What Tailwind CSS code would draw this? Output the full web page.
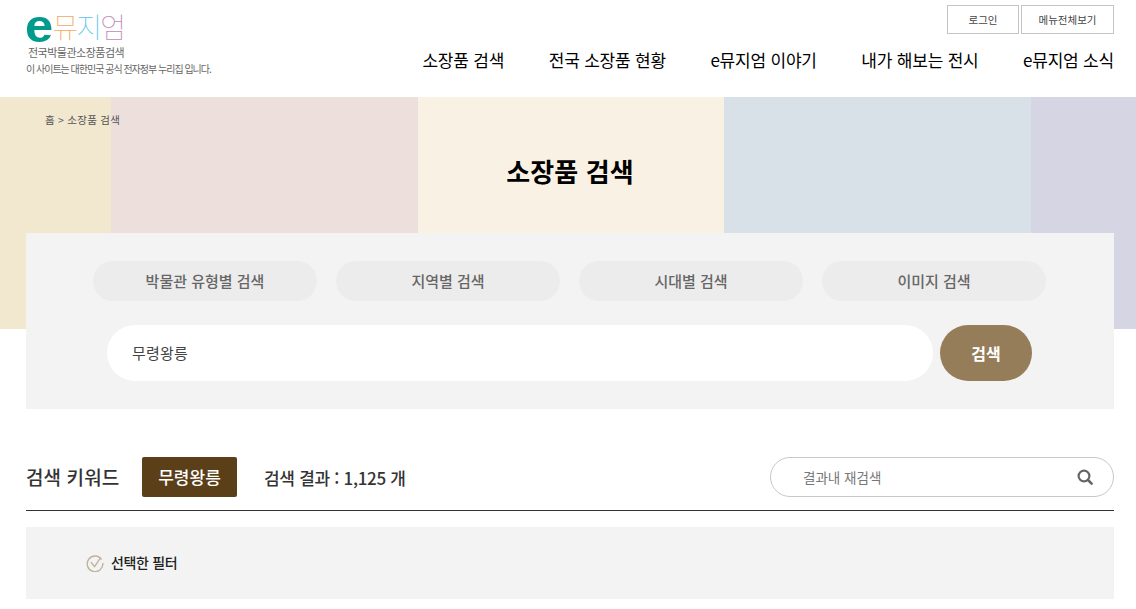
<!DOCTYPE html>
<html lang="ko">
<head>
<meta charset="utf-8">
<script src="https://cdn.jsdelivr.net/npm/@tailwindcss/browser@4"></script>
</head>
<body class="bg-white overflow-hidden font-['Noto_Sans_CJK_KR','Noto_Sans',sans-serif] text-[#222]">
<div class="w-[1136px] h-[609px] overflow-hidden">
  <header class="h-[97px] pl-[22px] pr-[22px] flex justify-between">
    <div class="w-[200px] pl-[4px] shrink-0">
      <div class="flex items-end h-[44px] pb-px">
        <span class="font-['Liberation_Sans'] font-bold text-[46px] text-[#009b8c] leading-[34px] h-[34px] scale-x-110 origin-left -ml-[1px] mr-[2px]">e</span>
        <span class="text-[28px] font-thin leading-[34px] text-[#f5a860]">뮤</span>
        <span class="text-[28px] font-thin leading-[34px] text-[#55c4ee] -ml-[2px]">지</span>
        <span class="text-[28px] font-thin leading-[34px] text-[#c08abb] -ml-[2px]">엄</span>
      </div>
      <p class="text-[11px] leading-[14px] pl-[2px] text-[#666] tracking-[-0.5px] mt-px">전국박물관소장품검색</p>
      <p class="text-[10px] leading-[14px] mt-[3px] text-[#666] tracking-[-1px] whitespace-nowrap">이 사이트는 대한민국 공식 전자정부 누리집 입니다.</p>
    </div>
    <div class="flex flex-col items-end">
      <div class="flex gap-[2px] mt-[5px]">
        <a class="w-[72px] h-[29px] border border-[#c4c4c4] flex items-center justify-center text-[10.5px] text-[#444]">로그인</a>
        <a class="w-[93px] h-[29px] border border-[#c4c4c4] flex items-center justify-center text-[10.5px] text-[#444]">메뉴전체보기</a>
      </div>
      <nav class="flex gap-[44.5px] mt-[13px] text-[17px] leading-[26px] font-normal text-black tracking-[-0.2px] whitespace-nowrap">
        <a>소장품 검색</a><a>전국 소장품 현황</a><a>e뮤지엄 이야기</a><a>내가 해보는 전시</a><a>e뮤지엄 소식</a>
      </nav>
    </div>
  </header>

  <section class="relative h-[232px] flex">
    <div class="w-[111px] bg-[#f2e8d0]"></div>
    <div class="w-[307px] bg-[#eddfdc]"></div>
    <div class="w-[306px] bg-[#f9f2e4]"></div>
    <div class="w-[307px] bg-[#d8e0e8]"></div>
    <div class="flex-1 bg-[#d5d5e3]"></div>
    <p class="absolute left-[45px] top-[15px] text-[10.5px] leading-[16px] text-[#555] tracking-[0.25px]">홈 &gt; 소장품 검색</p>
    <h1 class="absolute left-[4px] right-0 top-[54px] text-center text-[26px] leading-[40px] font-bold text-black tracking-[0.1px]">소장품 검색</h1>
  </section>

  <section class="relative ml-[26px] w-[1088px] -mt-[96px] h-[176px] bg-[#f3f3f3] pt-[28px]">
    <div class="flex gap-[19px] pl-[67px]">
      <a class="w-[224px] h-[40px] rounded-full bg-[#ececec] flex items-center justify-center text-[15px] font-medium text-[#666]">박물관 유형별 검색</a>
      <a class="w-[224px] h-[40px] rounded-full bg-[#ececec] flex items-center justify-center text-[15px] font-medium text-[#666]">지역별 검색</a>
      <a class="w-[224px] h-[40px] rounded-full bg-[#ececec] flex items-center justify-center text-[15px] font-medium text-[#666]">시대별 검색</a>
      <a class="w-[224px] h-[40px] rounded-full bg-[#ececec] flex items-center justify-center text-[15px] font-medium text-[#666]">이미지 검색</a>
    </div>
    <div class="flex gap-[7px] mt-[24px] pl-[81px]">
      <div class="w-[826px] h-[56px] rounded-full bg-white pl-[25px] flex items-center text-[15px] text-[#444] tracking-[0.2px]">무령왕릉</div>
      <button class="w-[92px] h-[56px] rounded-full bg-[#967d5a] text-white text-[16px] font-bold">검색</button>
    </div>
  </section>

  <section class="ml-[26px] w-[1088px] mt-[48px] h-[54px] border-b border-[#333] flex items-start">
    <h2 class="text-[19px] leading-[40px] font-medium text-[#333] w-[116px] tracking-[0.1px] whitespace-nowrap">검색 키워드</h2>
    <span class="w-[95px] h-[40px] rounded-[2px] bg-[#5a3f19] text-white text-[17px] font-medium flex items-center justify-center">무령왕릉</span>
    <p class="ml-[27px] text-[17px] leading-[42px] font-medium text-[#333] tracking-[-0.3px] whitespace-nowrap">검색 결과 : 1,125 개</p>
    <div class="ml-auto w-[344px] h-[40px] rounded-full border border-[#c8c8c8] bg-white flex items-center justify-between pl-[32px] pr-[20px] text-[13.5px] text-[#777]">
      <span>결과내 재검색</span>
      <svg width="16" height="16" viewBox="0 0 16 16" fill="none" stroke="#666" stroke-width="2.2"><circle cx="7" cy="7" r="5.4"/><path d="M11 11 L14.6 14.6" stroke-linecap="round" stroke-width="2.6"/></svg>
    </div>
  </section>

  <section class="ml-[26px] w-[1088px] mt-[16px] h-[72px] bg-[#f3f3f3] flex items-center pl-[60px] gap-[7px]">
    <svg width="18" height="18" viewBox="0 0 18 18" fill="none" stroke="#bfb39c" stroke-width="1.4"><path d="M15.6 5.6 A7.8 7.8 0 1 0 16.8 9"/><path d="M5 8.2 L8.6 12.6 L14.6 3.6" /></svg>
    <span class="text-[14px] font-medium text-[#222] tracking-[-0.35px] -mt-[2px]">선택한 필터</span>
  </section>
</div>
</body>
</html>
